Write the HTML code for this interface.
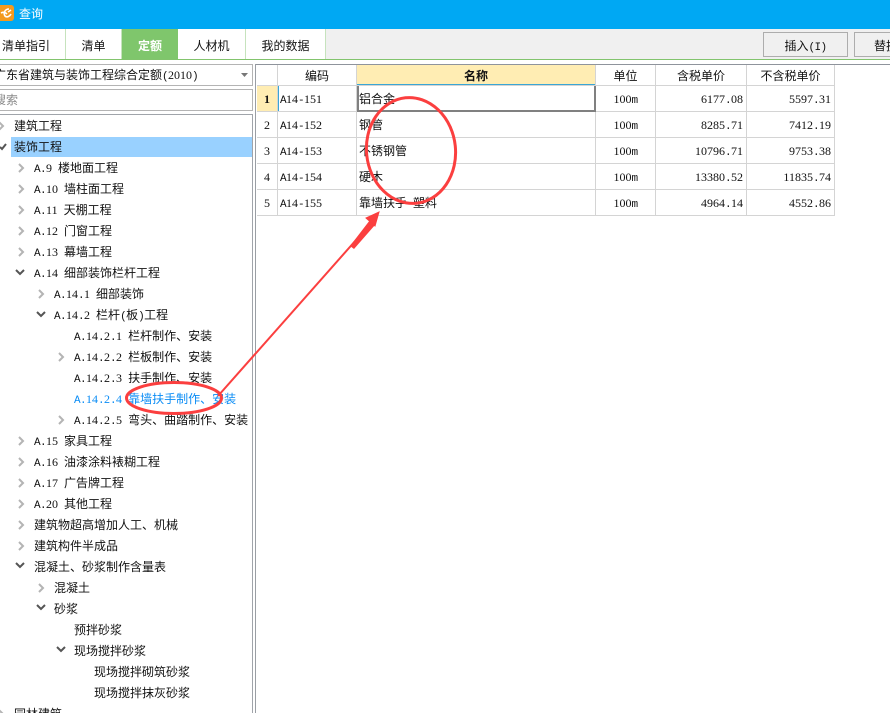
<!DOCTYPE html>
<html lang="zh"><head><meta charset="utf-8"><style>
html,body{margin:0;padding:0;background:#fff;width:890px;height:713px;overflow:hidden}
body{position:relative;font:12px/14px "WenQuanYi Zen Hei","Noto Sans CJK SC",sans-serif;color:#111}
div{position:absolute;white-space:pre}
#root{left:0;top:0;width:890px;height:713px;overflow:hidden;background:#fff}
i{font:normal 12px/14px "Liberation Serif",serif}
u{font:normal 11px/14px "Liberation Mono",monospace;letter-spacing:-.6px;text-decoration:none}
.b{box-sizing:border-box}
.tab{top:29px;height:30px;line-height:33px;text-align:center;border-right:1px solid #c6e3bd;box-sizing:border-box;background:#fff;font-size:12px}
.r{height:14px}
.l0{left:14px}.l1{left:34px}.l2{left:54px}.l3{left:74px}.l4{left:94px}
.hl{position:absolute;left:257px;width:578px;height:1px;background:#d4d4d4}
.vl{position:absolute;top:65px;width:1px;height:151px;background:#d4d4d4}
.c{position:absolute;height:14px;text-align:center}
.m{position:absolute;height:14px;text-align:right}
.cn{position:absolute;left:359px;height:14px}
svg{position:absolute}
</style></head><body><div id="root">
<div style="left:0;top:0;width:890px;height:29px;background:#00a8f3"></div>
<div class="b" style="left:0;top:5px;width:14px;height:16px;background:#f39a1f;border-radius:0 3px 3px 0"></div>
<svg style="left:0;top:5px" width="14" height="16"><path d="M9 4C5 4 3 8 5 11C7 13 10 11 11 9M1 8C3 7 5 7 7 9M8 7L11 5" fill="none" stroke="#fff" stroke-width="1.6"/></svg>
<div style="left:19px;top:7px;color:#fff">查询</div>

<div style="left:0;top:29px;width:890px;height:30px;background:#f0f0f0"></div>
<div style="left:0;top:59px;width:890px;height:1px;background:#82c46d"></div>
<div class="tab" style="left:-13px;width:79px">清单指引</div>
<div class="tab" style="left:66px;width:56px">清单</div>
<div class="tab" style="left:122px;width:56px;background:#7fc66c;color:#fff;border:0;font-weight:bold">定额</div>
<div class="tab" style="left:178px;width:68px">人材机</div>
<div class="tab" style="left:246px;width:80px">我的数据</div>
<div class="b" style="left:763px;top:32px;width:85px;height:25px;border:1px solid #adadad;background:#f0f0f0;text-align:center;line-height:25px">插入<u>(I)</u></div>
<div class="b" style="left:854px;top:32px;width:60px;height:25px;border:1px solid #adadad;background:#f0f0f0;line-height:25px;padding-left:19px">替换</div>
<div style="left:0;top:60px;width:890px;height:4px;background:#fff"></div>
<div style="left:255px;top:64px;width:635px;height:1px;background:#8f949c"></div>

<div class="b" style="left:-2px;top:64px;width:255px;height:22px;border:1px solid #b4b4b4;background:#fff;line-height:20px;text-indent:-5px">广东省建筑与装饰工程综合定额<u>(</u><i>2010</i><u>)</u></div>
<svg style="left:240px;top:72px" width="9" height="6"><path d="M1 1H8L4.500 5Z" fill="#777"/></svg>
<div class="b" style="left:-2px;top:89px;width:255px;height:22px;border:1px solid #b4b4b4;background:#fff;line-height:20px;color:#8a8a8a;text-indent:-5px">搜索</div>
<div class="b" style="left:-2px;top:114px;width:255px;height:620px;border:1px solid #a0a4aa;background:#fff"></div>
<div style="left:255px;top:64px;width:1px;height:649px;background:#9a9ea4"></div>
<div style="left:11px;top:137px;width:241px;height:20px;background:#99d1ff"></div>

<div class="r l0" style="top:119px">建筑工程</div>
<div class="r l0" style="top:140px">装饰工程</div>
<div class="r l1" style="top:161px"><u>A.</u><i>9</i><u> </u>楼地面工程</div>
<div class="r l1" style="top:182px"><u>A.</u><i>10</i><u> </u>墙柱面工程</div>
<div class="r l1" style="top:203px"><u>A.</u><i>11</i><u> </u>天棚工程</div>
<div class="r l1" style="top:224px"><u>A.</u><i>12</i><u> </u>门窗工程</div>
<div class="r l1" style="top:245px"><u>A.</u><i>13</i><u> </u>幕墙工程</div>
<div class="r l1" style="top:266px"><u>A.</u><i>14</i><u> </u>细部装饰栏杆工程</div>
<div class="r l2" style="top:287px"><u>A.</u><i>14</i><u>.</u><i>1</i><u> </u>细部装饰</div>
<div class="r l2" style="top:308px"><u>A.</u><i>14</i><u>.</u><i>2</i><u> </u>栏杆<u>(</u>板<u>)</u>工程</div>
<div class="r l3" style="top:329px"><u>A.</u><i>14</i><u>.</u><i>2</i><u>.</u><i>1</i><u> </u>栏杆制作、安装</div>
<div class="r l3" style="top:350px"><u>A.</u><i>14</i><u>.</u><i>2</i><u>.</u><i>2</i><u> </u>栏板制作、安装</div>
<div class="r l3" style="top:371px"><u>A.</u><i>14</i><u>.</u><i>2</i><u>.</u><i>3</i><u> </u>扶手制作、安装</div>
<div class="r l3" style="top:392px;color:#0a8cf5"><u>A.</u><i>14</i><u>.</u><i>2</i><u>.</u><i>4</i><u> </u>靠墙扶手制作、安装</div>
<div class="r l3" style="top:413px"><u>A.</u><i>14</i><u>.</u><i>2</i><u>.</u><i>5</i><u> </u>弯头、曲踏制作、安装</div>
<div class="r l1" style="top:434px"><u>A.</u><i>15</i><u> </u>家具工程</div>
<div class="r l1" style="top:455px"><u>A.</u><i>16</i><u> </u>油漆涂料裱糊工程</div>
<div class="r l1" style="top:476px"><u>A.</u><i>17</i><u> </u>广告牌工程</div>
<div class="r l1" style="top:497px"><u>A.</u><i>20</i><u> </u>其他工程</div>
<div class="r l1" style="top:518px">建筑物超高增加人工、机械</div>
<div class="r l1" style="top:539px">建筑构件半成品</div>
<div class="r l1" style="top:560px">混凝土、砂浆制作含量表</div>
<div class="r l2" style="top:581px">混凝土</div>
<div class="r l2" style="top:602px">砂浆</div>
<div class="r l3" style="top:623px">预拌砂浆</div>
<div class="r l3" style="top:644px">现场搅拌砂浆</div>
<div class="r l4" style="top:665px">现场搅拌砌筑砂浆</div>
<div class="r l4" style="top:686px">现场搅拌抹灰砂浆</div>
<div class="r l0" style="top:707px">园林建筑</div>

<svg style="left:0;top:114px" width="80" height="599" fill="none" stroke-width="2">
<g stroke="#b4b4b4">
<path d="M-1 8L3 12L-1 16"/>
<path d="M19 50L23 54L19 58M19 71L23 75L19 79M19 92L23 96L19 100M19 113L23 117L19 121M19 134L23 138L19 142"/>
<path d="M39 176L43 180L39 184"/>
<path d="M59 239L63 243L59 247M59 302L63 306L59 310"/>
<path d="M19 323L23 327L19 331M19 344L23 348L19 352M19 365L23 369L19 373M19 386L23 390L19 394M19 407L23 411L19 415M19 428L23 432L19 436"/>
<path d="M39 470L43 474L39 478"/>
<path d="M-1 596L3 600"/>
</g>
<g stroke="#555">
<path d="M0 33L2 35L6 30"/>
<path d="M16 156L20 160L24 156"/>
<path d="M37 198L41 202L45 198"/>
<path d="M16 449L20 453L24 449"/>
<path d="M37 491L41 495L45 491"/>
<path d="M57 533L61 537L65 533"/>
</g>
</svg>

<div style="left:357px;top:65px;width:238px;height:20px;background:#ffedb3"></div>
<div style="left:257px;top:86px;width:20px;height:25px;background:#ffedb3"></div>
<div style="left:357px;top:84px;width:238px;height:2px;background:#3aa6d6"></div>
<div style="left:277px;top:86px;width:2px;height:25px;background:#3aa6d6"></div>
<div class="hl" style="top:85px"></div><div class="hl" style="top:111px"></div><div class="hl" style="top:137px"></div><div class="hl" style="top:163px"></div><div class="hl" style="top:189px"></div><div class="hl" style="top:215px"></div>
<div class="vl" style="left:277px"></div><div class="vl" style="left:356px"></div><div class="vl" style="left:595px"></div><div class="vl" style="left:655px"></div><div class="vl" style="left:746px"></div><div class="vl" style="left:834px"></div>
<div class="b" style="left:357px;top:86px;width:239px;height:26px;border:solid #808080;border-width:0 2px 2px 2px"></div>

<div class="c" style="left:278px;width:78px;top:69px">编码</div>
<div class="c" style="left:357px;width:238px;top:69px;font-weight:bold">名称</div>
<div class="c" style="left:596px;width:59px;top:69px">单位</div>
<div class="c" style="left:656px;width:90px;top:69px">含税单价</div>
<div class="c" style="left:747px;width:87px;top:69px">不含税单价</div>

<div class="c" style="left:257px;width:20px;top:92px"><i style="font-weight:bold">1</i></div>
<div class="c" style="left:257px;width:20px;top:118px"><i>2</i></div>
<div class="c" style="left:257px;width:20px;top:144px"><i>3</i></div>
<div class="c" style="left:257px;width:20px;top:170px"><i>4</i></div>
<div class="c" style="left:257px;width:20px;top:196px"><i>5</i></div>

<div style="left:280px;top:92px"><u>A</u><i>14</i><u>-</u><i>151</i></div>
<div style="left:280px;top:118px"><u>A</u><i>14</i><u>-</u><i>152</i></div>
<div style="left:280px;top:144px"><u>A</u><i>14</i><u>-</u><i>153</i></div>
<div style="left:280px;top:170px"><u>A</u><i>14</i><u>-</u><i>154</i></div>
<div style="left:280px;top:196px"><u>A</u><i>14</i><u>-</u><i>155</i></div>

<div class="cn" style="top:92px">铝合金</div>
<div class="cn" style="top:118px">钢管</div>
<div class="cn" style="top:144px">不锈钢管</div>
<div class="cn" style="top:170px">硬木</div>
<div class="cn" style="top:196px">靠墙扶手<u> </u>塑料</div>

<div class="c" style="left:596px;width:59px;top:92px"><i>100</i><u>m</u></div>
<div class="c" style="left:596px;width:59px;top:118px"><i>100</i><u>m</u></div>
<div class="c" style="left:596px;width:59px;top:144px"><i>100</i><u>m</u></div>
<div class="c" style="left:596px;width:59px;top:170px"><i>100</i><u>m</u></div>
<div class="c" style="left:596px;width:59px;top:196px"><i>100</i><u>m</u></div>

<div class="m" style="left:656px;width:87px;top:92px"><i>6177</i><u>.</u><i>08</i></div>
<div class="m" style="left:656px;width:87px;top:118px"><i>8285</i><u>.</u><i>71</i></div>
<div class="m" style="left:656px;width:87px;top:144px"><i>10796</i><u>.</u><i>71</i></div>
<div class="m" style="left:656px;width:87px;top:170px"><i>13380</i><u>.</u><i>52</i></div>
<div class="m" style="left:656px;width:87px;top:196px"><i>4964</i><u>.</u><i>14</i></div>
<div class="m" style="left:747px;width:84px;top:92px"><i>5597</i><u>.</u><i>31</i></div>
<div class="m" style="left:747px;width:84px;top:118px"><i>7412</i><u>.</u><i>19</i></div>
<div class="m" style="left:747px;width:84px;top:144px"><i>9753</i><u>.</u><i>38</i></div>
<div class="m" style="left:747px;width:84px;top:170px"><i>11835</i><u>.</u><i>74</i></div>
<div class="m" style="left:747px;width:84px;top:196px"><i>4552</i><u>.</u><i>86</i></div>

<svg style="left:0;top:0" width="890" height="713" fill="none" stroke="#fb3f3f">
<ellipse cx="411" cy="150.500" rx="44.500" ry="53" stroke-width="3" transform="rotate(-6 411 150.500)"/>
<ellipse cx="174" cy="398" rx="47.500" ry="15.500" stroke-width="3"/>
<path d="M218 396L372 222" stroke-width="2"/>
<path d="M350 246L354 249L375 225L370 220Z" fill="#fb3f3f" stroke="none"/>
<path d="M379 212L375 226L366 218Z" fill="#fb3f3f" stroke-width="1"/>
</svg>
</div></body></html>
